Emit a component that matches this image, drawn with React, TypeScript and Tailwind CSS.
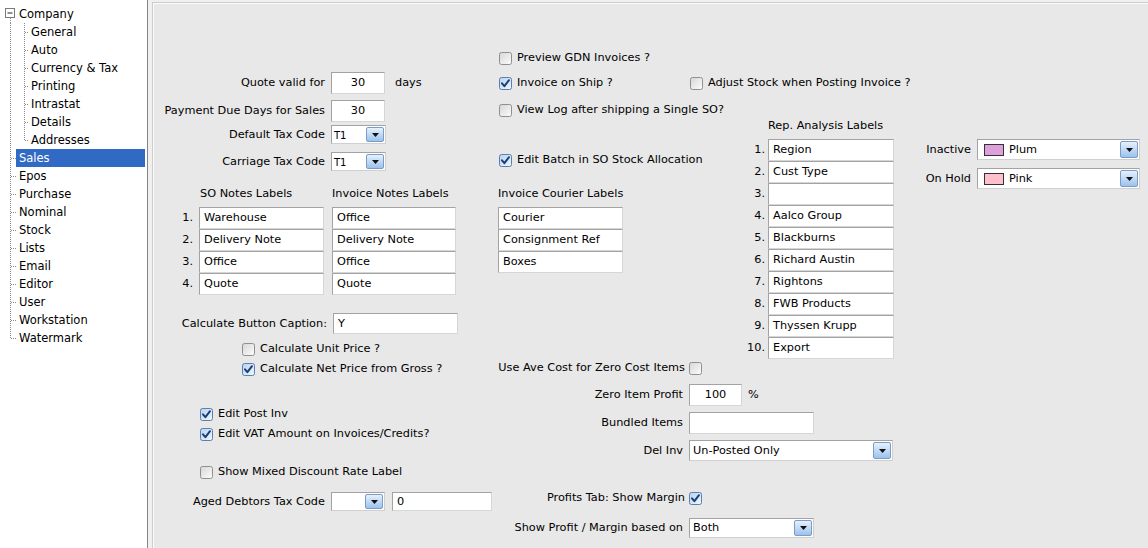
import React from "react"

type Node = { label: string; level: 0 | 1; last?: boolean; open?: boolean; selected?: boolean }

const TREE: Node[] = [
  { label: "Company", level: 0, open: true },
  { label: "General", level: 1 },
  { label: "Auto", level: 1 },
  { label: "Currency & Tax", level: 1 },
  { label: "Printing", level: 1 },
  { label: "Intrastat", level: 1 },
  { label: "Details", level: 1 },
  { label: "Addresses", level: 1, last: true },
  { label: "Sales", level: 0, selected: true },
  { label: "Epos", level: 0 },
  { label: "Purchase", level: 0 },
  { label: "Nominal", level: 0 },
  { label: "Stock", level: 0 },
  { label: "Lists", level: 0 },
  { label: "Email", level: 0 },
  { label: "Editor", level: 0 },
  { label: "User", level: 0 },
  { label: "Workstation", level: 0 },
  { label: "Watermark", level: 0, last: true },
]

const SO_NOTES = ["Warehouse", "Delivery Note", "Office", "Quote"]
const INV_NOTES = ["Office", "Delivery Note", "Office", "Quote"]
const COURIER = ["Courier", "Consignment Ref", "Boxes"]
const REP_LABELS = ["Region", "Cust Type", "", "Aalco Group", "Blackburns", "Richard Austin", "Rightons", "FWB Products", "Thyssen Krupp", "Export"]

function TreeLines({ node }: { node: Node }) {
  const dot = { stroke: "#8a8a8a", strokeWidth: 1, strokeDasharray: "1 1" }
  if (node.open) {
    return (
      <svg width="16" height="18" className="shrink-0">
        <rect x="5.5" y="3.5" width="9" height="9" fill="#fff" stroke="#7b7b7b" />
        <line x1="7.5" y1="8" x2="12.5" y2="8" stroke="#222" />
        <line x1="10.5" y1="13" x2="10.5" y2="18" {...dot} />
      </svg>
    )
  }
  if (node.level === 1) {
    return (
      <svg width="28" height="18" className="shrink-0">
        <line x1="10.5" y1="0" x2="10.5" y2="18" {...dot} />
        <line x1="24.5" y1="0" x2="24.5" y2={node.last ? 9 : 18} {...dot} />
        <line x1="25" y1="9.5" x2="28" y2="9.5" {...dot} />
      </svg>
    )
  }
  return (
    <svg width="16" height="18" className="shrink-0">
      <line x1="10.5" y1="0" x2="10.5" y2={node.last ? 9 : 18} {...dot} />
      <line x1="11" y1="9.5" x2="16" y2="9.5" {...dot} />
    </svg>
  )
}

function Check({ on }: { on?: boolean }) {
  return (
    <svg width="13" height="13" viewBox="0 0 13 13" className="shrink-0">
      <defs>
        <linearGradient id="cbOff" x1="0" y1="0" x2="1" y2="1">
          <stop offset="0" stopColor="#d6d6d6" />
          <stop offset="1" stopColor="#fdfdfd" />
        </linearGradient>
        <linearGradient id="cbOn" x1="0" y1="0" x2="1" y2="1">
          <stop offset="0" stopColor="#b6d2ef" />
          <stop offset="1" stopColor="#f2f8fe" />
        </linearGradient>
      </defs>
      <rect x="0.5" y="0.5" width="12" height="12" rx="2" fill={on ? "url(#cbOn)" : "url(#cbOff)"} stroke={on ? "#5b7fae" : "#8e8f8f"} />
      {on && <path d="M3 6.3 L5.4 9.2 L10 3.2" fill="none" stroke="#1d3f77" strokeWidth="2" strokeLinecap="round" strokeLinejoin="round" />}
    </svg>
  )
}

function CheckRow({ on, text, className = "" }: { on?: boolean; text: string; className?: string }) {
  return (
    <div className={`flex items-center gap-[5px] whitespace-nowrap ${className}`}>
      <Check on={on} />
      <span className="pt-[1px]">{text}</span>
    </div>
  )
}

function TextBox({ value = "", className = "", center }: { value?: string; className?: string; center?: boolean }) {
  return (
    <div className={`bg-white border border-[#a3a3a3] border-r-[#d6d6d6] border-b-[#d6d6d6] px-[4px] pt-[1px] flex items-center whitespace-nowrap overflow-hidden ${center ? "justify-center" : ""} ${className}`}>
      {value}
    </div>
  )
}

function DropBtn() {
  return (
    <div className="w-[18px] shrink-0 my-[1px] mr-[1px] rounded-[2px] border border-[#7a9cc6] bg-gradient-to-b from-[#e6f1fc] to-[#9cc2ec] flex items-center justify-center">
      <svg width="7" height="4" viewBox="0 0 7 4"><path d="M0 0 H7 L3.5 4 Z" fill="#111" /></svg>
    </div>
  )
}

function Combo({ value = "", className = "", small, swatch }: { value?: string; className?: string; small?: boolean; swatch?: string }) {
  return (
    <div className={`bg-white border border-[#a3a3a3] border-r-[#d0d0d0] border-b-[#d0d0d0] flex ${className}`}>
      <div className={`flex-1 flex items-center whitespace-nowrap overflow-hidden pt-[1px] ${small ? "text-[10px] pl-[2px]" : "pl-[3px]"}`}>
        {swatch && <span className={`w-[20px] h-[12px] border border-[#333] ml-[3px] mr-[5px] ${swatch}`} />}
        {value}
      </div>
      <DropBtn />
    </div>
  )
}

function Label({ w, children }: { w: string; children: React.ReactNode }) {
  return <span className={`${w} shrink-0 text-right whitespace-nowrap pt-[1px]`}>{children}</span>
}

export default function App() {
  return (
    <div className="w-[1148px] h-[548px] flex bg-[#f0f0f0] overflow-hidden text-black font-['DejaVu_Sans',sans-serif]">
      {/* Tree */}
      <div className="w-[148px] h-full shrink-0 bg-white border-r border-[#858585] pt-[5px] text-[11.5px]">
        {TREE.map(n => (
          <div key={n.label} className="flex h-[18px] items-stretch">
            <TreeLines node={n} />
            <span className={`flex items-center whitespace-nowrap px-[3px] pt-[1px] ${n.selected ? "flex-1 mr-[2px] bg-[#316ac5] text-white" : ""}`}>
              {n.label}
            </span>
          </div>
        ))}
      </div>

      {/* Settings panel */}
      <div className="ml-[4px] mt-[2px] flex-1 h-[546px] border-l border-t border-[#cdcdcd] shadow-[inset_1px_1px_0_#fbfbfb] bg-[#e8e8e8] flex pl-[7px] pt-[1px] text-[11.3px]">
        {/* Left column */}
        <div className="w-[335px] shrink-0 flex flex-col">
          <div className="mt-[68px] h-[22px] flex items-center">
            <Label w="w-[171px] pr-[6px]">Quote valid for</Label>
            <TextBox value="30" center className="w-[54px] h-[22px]" />
            <span className="ml-[10px] pt-[1px]">days</span>
          </div>
          <div className="mt-[6px] h-[22px] flex items-center">
            <Label w="w-[171px] pr-[6px]">Payment Due Days for Sales</Label>
            <TextBox value="30" center className="w-[54px] h-[22px]" />
          </div>
          <div className="mt-[3px] h-[19px] flex items-center">
            <Label w="w-[171px] pr-[6px]">Default Tax Code</Label>
            <Combo value="T1" small className="w-[55px] h-[19px]" />
          </div>
          <div className="mt-[8px] h-[19px] flex items-center">
            <Label w="w-[171px] pr-[6px]">Carriage Tax Code</Label>
            <Combo value="T1" small className="w-[55px] h-[19px]" />
          </div>

          <div className="mt-[16px] h-[14px] flex items-center whitespace-nowrap">
            <span className="ml-[40px] w-[132px]">SO Notes Labels</span>
            <span>Invoice Notes Labels</span>
          </div>
          <div className="mt-[6px] flex flex-col">
            {SO_NOTES.map((s, i) => (
              <div key={i} className="h-[22px] flex items-center">
                <span className="w-[33px] text-right pt-[1px]">{i + 1}.</span>
                <TextBox value={s} className="ml-[6px] w-[125px] h-[22px]" />
                <TextBox value={INV_NOTES[i]} className="ml-[8px] w-[124px] h-[22px]" />
              </div>
            ))}
          </div>

          <div className="mt-[18px] h-[21px] flex items-center">
            <Label w="w-[173px] pr-[6px]">Calculate Button Caption:</Label>
            <TextBox value="Y" className="w-[125px] h-[21px]" />
          </div>
          <CheckRow text="Calculate Unit Price ?" className="mt-[5px] h-[20px] ml-[82px]" />
          <CheckRow on text="Calculate Net Price from Gross ?" className="h-[20px] ml-[82px]" />

          <CheckRow on text="Edit Post Inv" className="mt-[25px] h-[20px] ml-[40px]" />
          <CheckRow on text="Edit VAT Amount on Invoices/Credits?" className="h-[20px] ml-[40px]" />

          <CheckRow text="Show Mixed Discount Rate Label" className="mt-[18px] h-[20px] ml-[40px]" />

          <div className="mt-[10px] h-[19px] flex items-center">
            <Label w="w-[171px] pr-[6px]">Aged Debtors Tax Code</Label>
            <Combo className="w-[54px] h-[19px]" />
            <TextBox value="0" className="ml-[7px] w-[100px] h-[19px]" />
          </div>
        </div>

        {/* Middle / right columns */}
        <div className="w-[651px] shrink-0 flex flex-col">
          <CheckRow text="Preview GDN Invoices ?" className="mt-[44px] h-[20px] ml-[4px]" />
          <div className="mt-[5px] h-[20px] ml-[4px] flex items-center">
            <CheckRow on text="Invoice on Ship ?" className="w-[191px]" />
            <CheckRow text="Adjust Stock when Posting Invoice ?" />
          </div>
          <CheckRow text="View Log after shipping a Single SO?" className="mt-[8px] h-[18px] ml-[4px]" />

          <div className="flex">
            <div className="w-[245px] shrink-0 flex flex-col">
              <CheckRow on text="Edit Batch in SO Stock Allocation" className="mt-[31px] h-[20px] ml-[4px]" />
              <span className="mt-[17px] h-[14px] ml-[3px] flex items-center whitespace-nowrap">Invoice Courier Labels</span>
              <div className="mt-[6px] ml-[3px] flex flex-col">
                {COURIER.map(c => <TextBox key={c} value={c} className="w-[125px] h-[22px]" />)}
              </div>
            </div>

            <div className="w-[154px] shrink-0 flex flex-col">
              <span className="h-[14px] ml-[28px] flex items-center whitespace-nowrap">Rep. Analysis Labels</span>
              <div className="mt-[6px] flex flex-col">
                {REP_LABELS.map((r, i) => (
                  <div key={i} className="h-[22px] flex items-center">
                    <span className="w-[25px] text-right pt-[1px]">{i + 1}.</span>
                    <TextBox value={r} className="ml-[3px] w-[126px] h-[22px]" />
                  </div>
                ))}
              </div>
            </div>

            <div className="flex flex-col">
              <div className="mt-[20px] h-[21px] flex items-center">
                <Label w="w-[83px] pr-[6px]">Inactive</Label>
                <Combo value="Plum" swatch="bg-[#dda0dd]" className="w-[163px] h-[21px]" />
              </div>
              <div className="mt-[8px] h-[21px] flex items-center">
                <Label w="w-[83px] pr-[6px]">On Hold</Label>
                <Combo value="Pink" swatch="bg-[#ffc0cb]" className="w-[163px] h-[21px]" />
              </div>
            </div>
          </div>

          <div className="h-[18px] flex items-center">
            <Label w="w-[194px] pr-[4px]">Use Ave Cost for Zero Cost Items</Label>
            <Check />
          </div>
          <div className="mt-[7px] h-[22px] flex items-center">
            <Label w="w-[194px] pr-[6px]">Zero Item Profit</Label>
            <TextBox value="100" center className="w-[53px] h-[22px]" />
            <span className="ml-[6px] pt-[1px]">%</span>
          </div>
          <div className="mt-[6px] h-[22px] flex items-center">
            <Label w="w-[194px] pr-[6px]">Bundled Items</Label>
            <TextBox className="w-[125px] h-[22px]" />
          </div>
          <div className="mt-[6px] h-[21px] flex items-center">
            <Label w="w-[194px] pr-[6px]">Del Inv</Label>
            <Combo value="Un-Posted Only" className="w-[204px] h-[21px]" />
          </div>
          <div className="mt-[28px] h-[18px] flex items-center">
            <Label w="w-[194px] pr-[4px]">Profits Tab: Show Margin</Label>
            <Check on />
          </div>
          <div className="mt-[11px] h-[20px] flex items-center">
            <Label w="w-[194px] pr-[6px]">Show Profit / Margin based on</Label>
            <Combo value="Both" className="w-[125px] h-[20px]" />
          </div>
        </div>
      </div>
    </div>
  )
}
